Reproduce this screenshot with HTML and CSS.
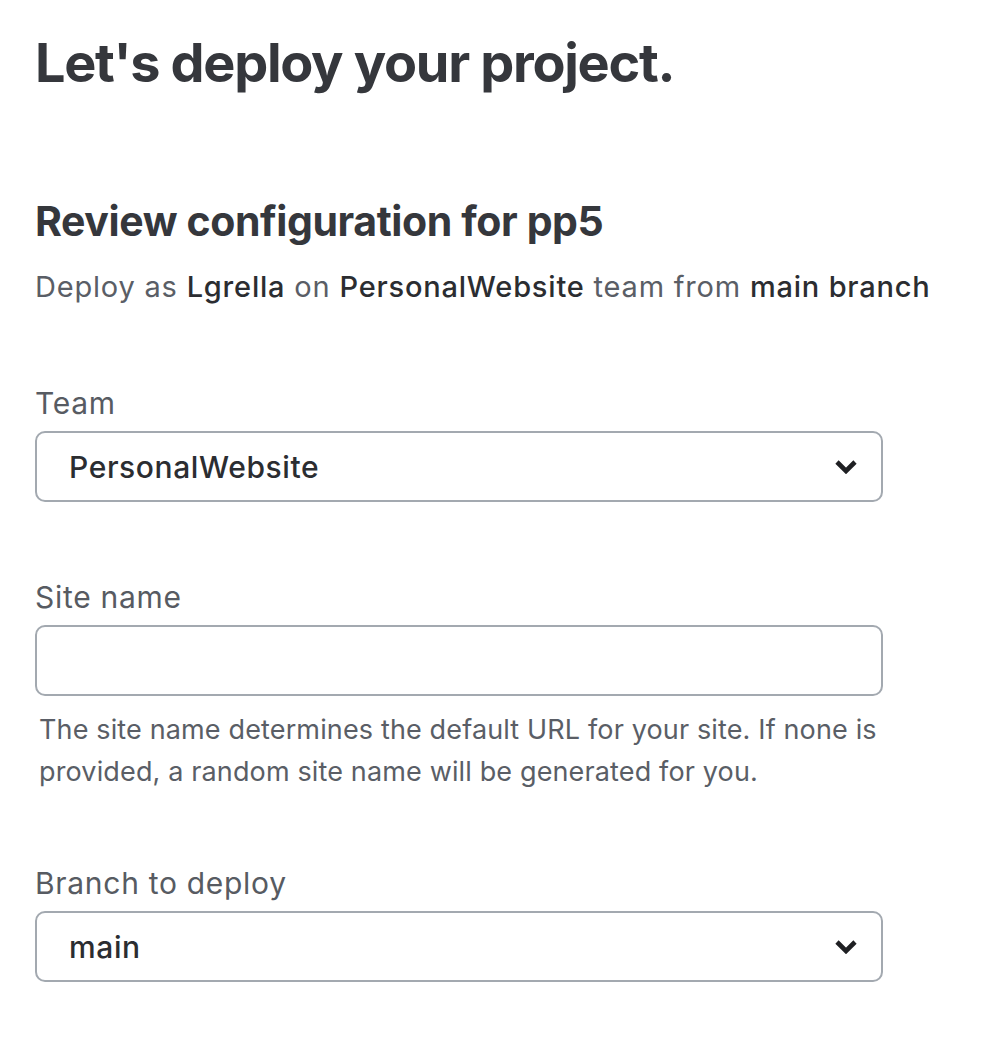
FILE: index.html
```html
<!DOCTYPE html>
<html lang="en">
<head>
<meta charset="utf-8">
<title>Deploy</title>
<link rel="stylesheet" href="styles.css">
</head>
<body>
<main class="page">
  <h1 class="title">Let's deploy your project.</h1>
  <h2 class="subtitle">Review configuration for pp5</h2>
  <p class="summary">Deploy as <strong>Lgrella</strong> on <strong>PersonalWebsite</strong> team from <strong>main branch</strong></p>

  <div class="field field-team">
    <label class="label">Team</label>
    <div class="select">
      <span class="select-value">PersonalWebsite</span>
      <svg class="chevron" viewBox="0 0 22 14" width="22" height="14"><path d="M2 2 L11 11 L20 2" fill="none" stroke="#1f2023" stroke-width="4.6" stroke-linejoin="miter"/></svg>
    </div>
  </div>

  <div class="field field-site">
    <label class="label">Site name</label>
    <div class="input"></div>
    <p class="help">The site name determines the default URL for your site. If none is provided, a random site name will be generated for you.</p>
  </div>

  <div class="field field-branch">
    <label class="label">Branch to deploy</label>
    <div class="select">
      <span class="select-value">main</span>
      <svg class="chevron" viewBox="0 0 22 14" width="22" height="14"><path d="M2 2 L11 11 L20 2" fill="none" stroke="#1f2023" stroke-width="4.6" stroke-linejoin="miter"/></svg>
    </div>
  </div>
</main>
</body>
</html>
```

FILE: styles.css
```css
* { box-sizing: border-box; }
html, body { margin: 0; background: #ffffff; }
body {
  font-family: Inter, "Noto Sans", "Liberation Sans", sans-serif;
  color: #35373c;
}
.page {
  padding: 30px 0 0 35px;
  width: 883px;
}
.title {
  margin: 0;
  font-size: 54px;
  font-weight: 700;
  line-height: 66px;
  letter-spacing: -1.3px;
  color: #35373c;
}
.subtitle {
  margin: 102px 0 0;
  font-size: 41px;
  font-weight: 700;
  line-height: 46px;
  letter-spacing: -0.4px;
  color: #35373c;
}
.summary {
  margin: 23px 0 0;
  font-size: 29px;
  line-height: 40px;
  letter-spacing: 0.8px;
  color: #5a5e66;
  white-space: nowrap;
}
.summary strong {
  font-weight: 500;
  color: #2b2d31;
}
.field { display: flex; flex-direction: column; }
.field-team { margin-top: 76px; }
.field-site { margin-top: 75px; }
.field-branch { margin-top: 70px; }
.label {
  font-size: 30px;
  line-height: 40px;
  letter-spacing: 0.7px;
  color: #575b62;
  margin-bottom: 8px;
}
.select, .input {
  height: 71px;
  border: 2px solid #a3a9b0;
  border-radius: 10px;
  background: #fff;
}
.select {
  display: flex;
  align-items: center;
  justify-content: space-between;
  padding: 0 24px 0 32px;
}
.select-value {
  font-size: 30px;
  font-weight: 500;
  letter-spacing: 0.6px;
  color: #2b2d31;
}
.chevron { display: block; }
.help {
  margin: 13px -30px 0 4px;
  font-size: 27px;
  line-height: 42px;
  letter-spacing: 0.14px;
  color: #5a5e66;
}
```
